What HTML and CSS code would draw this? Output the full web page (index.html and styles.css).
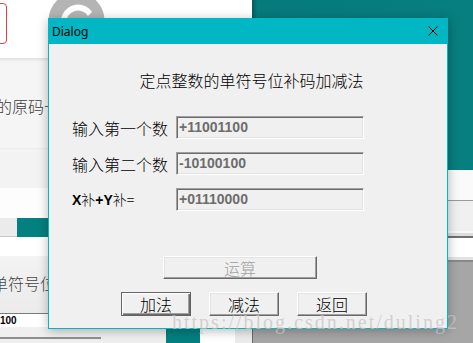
FILE: index.html
```html
<!DOCTYPE html>
<html lang="zh-CN">
<head>
<meta charset="utf-8">
<title>Dialog</title>
<link rel="stylesheet" href="styles.css">
</head>
<body>
<div class="desktop">
  <div class="win page">
    <div class="page-head">
      <div class="red-box"></div>
      <svg class="logo" viewBox="0 0 57 57" width="57" height="57">
        <circle cx="28.5" cy="28.5" r="28" fill="#b4b4b4"/>
        <path d="M13 30 A17 17 0 0 1 44 20 L40 24 A12 12 0 0 0 18 31 Z" fill="#ffffff"/>
      </svg>
    </div>
    <div class="page-sep"></div>
    <div class="band-a"><span class="page-text">的原码一</span></div>
    <div class="band-b"></div>
    <div class="band-c"></div>
    <div class="page-tabs"><span class="tab-light"></span><span class="tab-teal"></span></div>
    <div class="band-d"></div>
    <div class="band-e"><span class="page-text">单符号位补</span></div>
    <div class="page-input">100</div>
    <div class="page-foot">
      <span class="foot-light"><span class="foot-rule"></span></span>
      <span class="foot-teal"></span>
      <span class="foot-white"></span>
      <span class="foot-gray"></span>
    </div>
  </div>

  <div class="win teal-win"></div>

  <div class="win side-win">
    <div class="side-a"></div>
    <div class="side-line"></div>
    <div class="side-b"></div>
    <div class="side-c"></div>
    <div class="side-d"></div>
    <div class="side-e"></div>
    <div class="side-f"></div>
    <div class="side-g"></div>
    <div class="side-h"></div>
  </div>

  <div class="dialog">
    <div class="titlebar">
      <span class="title">Dialog</span>
      <svg class="close" viewBox="0 0 10 10" width="10" height="10">
        <path d="M0.5 0.5 L9.5 9.5 M9.5 0.5 L0.5 9.5" stroke="#000" stroke-width="1" fill="none"/>
      </svg>
    </div>
    <div class="dlg-body">
      <div class="heading">定点整数的单符号位补码加减法</div>
      <div class="form">
        <span class="label">输入第一个数</span>
        <div class="field">+11001100</div>
        <span class="label">输入第二个数</span>
        <div class="field">-10100100</div>
        <span class="label small"><b>X</b>补<b>+Y</b>补=</span>
        <div class="field">+01110000</div>
      </div>
      <div class="btn compute disabled">运算</div>
      <div class="btn-row">
        <div class="btn default">加法</div>
        <div class="btn">减法</div>
        <div class="btn">返回</div>
      </div>
    </div>
  </div>

  <div class="watermark">https://blog.csdn.net/duling2</div>
</div>
</body>
</html>
```

FILE: styles.css
```css
* { box-sizing: border-box; margin: 0; padding: 0; }
html, body { width: 473px; height: 343px; overflow: hidden; }
body {
  background: #a6a6a6;
  font-family: "Noto Sans CJK SC", "Noto Sans", sans-serif;
  font-weight: 300;
}
.desktop { position: relative; width: 473px; height: 343px; overflow: hidden; }
.win { position: absolute; }

/* background browser page */
.page {
  left: 0; top: 0; width: 253px; height: 343px;
  background: #fff;
  border-right: 1px solid #6a6a6a;
  display: flex; flex-direction: column;
  overflow: hidden;
}
.page-head { height: 58px; display: flex; align-items: flex-start; flex: none; }
.red-box {
  flex: none; margin: 3px 0 0 -20px; width: 27px; height: 41px;
  border: 1px solid #d64541; border-radius: 4px;
}
.logo { flex: none; margin: -8px 0 0 41px; display: block; }
.page-sep { height: 4px; flex: none; background: linear-gradient(#e0e0e0, #f5f5f5); }
.band-a { height: 86px; flex: none; background: #f5f5f5; padding-top: 34px; }
.page-text {
  display: block; margin-left: -4px; white-space: nowrap;
  font-size: 16px; line-height: 20px; color: #3a3a3a;
}
.band-b { height: 40px; flex: none; background: #f3f3f3; border-top: 1px solid #ececec; }
.band-c { height: 30px; flex: none; background: #fdfdfd; }
.page-tabs { height: 19px; flex: none; display: flex; }
.tab-light { width: 17px; background: #ebebeb; border-bottom: 1px solid #c6c6c6; }
.tab-teal { flex: 1; background: #058080; }
.band-d { height: 19px; flex: none; background: #fff; }
.band-e { height: 57px; flex: none; background: linear-gradient(#f3f3f3, #ebebeb); padding-top: 17px; }
.band-e .page-text { margin-left: -8px; color: #444; }
.page-input {
  height: 14px; flex: none; background: #fff; border-top: 1px solid #7a7a7a;
  font: bold 10px/13px "Liberation Sans", sans-serif; color: #000;
}
.page-foot { height: 16px; flex: none; display: flex; }
.foot-light { width: 166px; background: #efefef; padding-top: 10px; }
.foot-rule { display: block; width: 101px; height: 2px; background: #909090; }
.foot-teal { width: 34px; background: #057f7f; }
.foot-white { width: 35px; background: #fff; }
.foot-gray { flex: 1; background: #ececec; }

/* teal window top right */
.teal-win {
  left: 252px; top: 0; width: 221px; height: 170px;
  background: linear-gradient(90deg, #045a5c 0, #067a7c 5px, #077e80 100%);
}

/* light window right */
.side-win { left: 253px; top: 170px; width: 220px; display: flex; flex-direction: column; }
.side-a { height: 30px; background: linear-gradient(90deg, #ececec, #fafafa); }
.side-line { height: 1px; background: #9a9a9a; }
.side-b { height: 30px; background: linear-gradient(90deg, #e6e6e6, #f0f0f0); }
.side-c { height: 2px; background: #f6f6f6; }
.side-d { height: 3px; background: #dcdcdc; }
.side-e { height: 2px; background: #707070; }
.side-f { height: 19px; background: linear-gradient(90deg, #f0f0f0, #fff); }
.side-g { height: 3px; background: #e2e2e2; }
.side-h { height: 2px; background: #8a8a8a; }

/* dialog */
.dialog {
  position: absolute; left: 48px; top: 18px; width: 400px; height: 311px;
  border: 1px solid #00b7c3;
  background: #f0f0f0;
  box-shadow: 0 2px 10px rgba(0, 0, 0, 0.28);
  display: flex; flex-direction: column;
}
.titlebar {
  height: 25px; flex: none; background: #00b7c3;
  display: flex; align-items: center; justify-content: space-between;
  padding: 0 9px 1px 3px;
}
.title { font-family: "Noto Sans", sans-serif; font-weight: 400; font-size: 12px; color: #000; }
.close { display: block; }
.dlg-body { flex: 1; display: flex; flex-direction: column; align-items: flex-start; }
.heading {
  align-self: stretch; text-align: center; padding-left: 7px;
  margin-top: 26px; font-size: 16px; line-height: 20px; color: #000;
}
.form {
  margin: 26px 0 0 23px;
  display: grid; grid-template-columns: 104px 188px; grid-auto-rows: 23px; row-gap: 13px;
  align-items: center;
}
.label { font-size: 16px; line-height: 20px; color: #000; white-space: nowrap; }
.label.small { font-size: 14px; }
.label b { font-family: "Liberation Sans", sans-serif; font-weight: bold; }
.field {
  height: 23px; padding-left: 2px;
  border: 1px solid; border-color: #a0a0a0 #fff #fff #a0a0a0;
  box-shadow: inset 1px 1px #6d6d6d, inset -1px -1px #e3e3e3;
  background: #f0f0f0;
  font: bold 14px/21px "Liberation Sans", sans-serif; color: #6d6d6d;
}
.btn {
  width: 70px; height: 24px;
  display: flex; align-items: center; justify-content: center;
  background: #f0f0f0;
  border: 1px solid; border-color: #fff #696969 #696969 #fff;
  box-shadow: inset -1px -1px #a0a0a0, inset 1px 1px #e3e3e3;
  font-size: 16px; color: #000;
}
.btn.default {
  border: 1px solid #646464;
  box-shadow: inset 1px 1px #fff, inset -1px -1px #696969, inset -2px -2px #a0a0a0;
}
.btn.compute { width: 154px; height: 23px; margin: 45px 0 0 114px; }
.btn.disabled { color: #a0a0a0; }
.btn-row { display: flex; gap: 18px; margin: 13px 0 0 72px; }

.watermark {
  position: absolute; left: 172px; top: 312px;
  font-family: "Liberation Serif", serif; font-weight: 400; font-size: 20px; line-height: 20px;
  letter-spacing: 2px; white-space: nowrap;
  color: rgba(198, 198, 198, 0.76);
}
```
